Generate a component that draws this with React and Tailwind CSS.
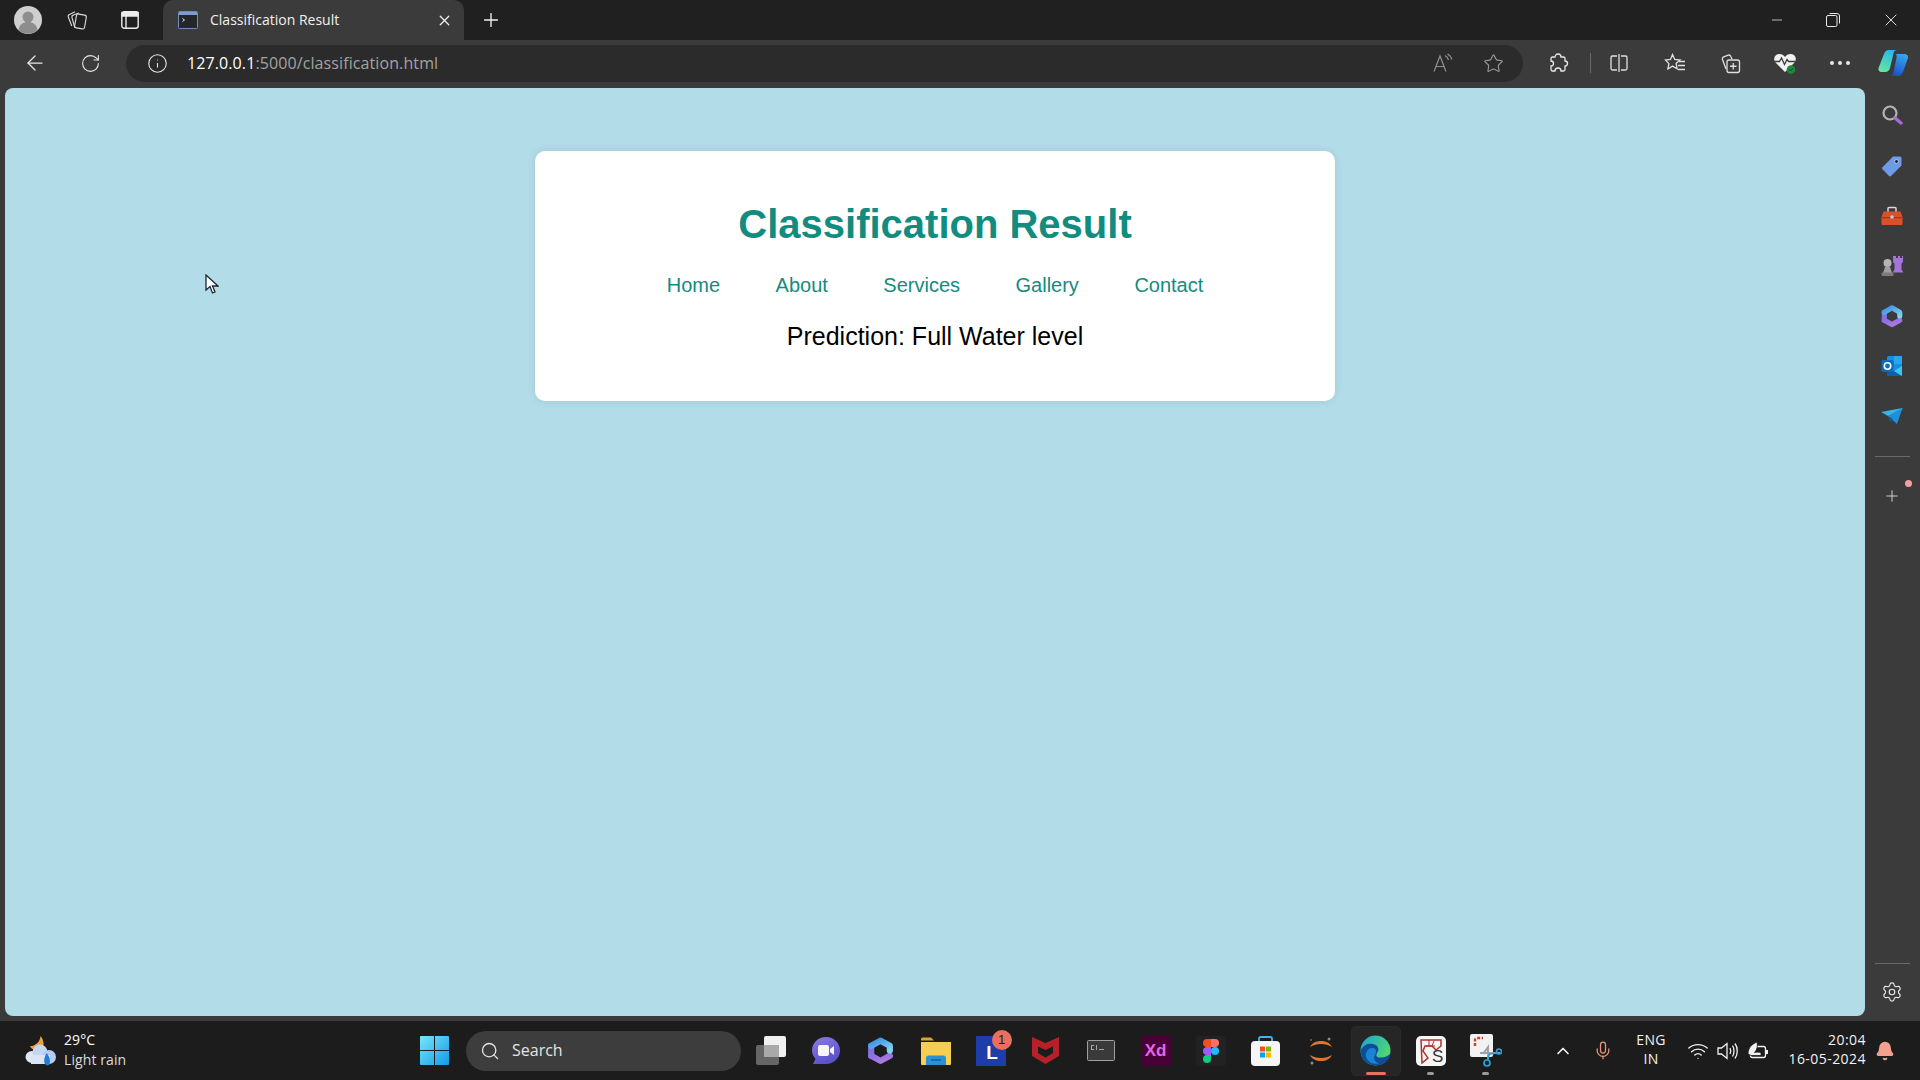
import {
  ArrowLeft,
  Bell,
  ChevronUp,
  Info,
  Mic,
  Minus,
  Plus,
  RotateCw,
  Search,
  Settings,
  Star,
  Wifi,
  X,
} from "lucide-react";

const uiFont = "font-['Open_Sans','Noto_Sans',sans-serif]";

const NAV_LINKS = ["Home", "About", "Services", "Gallery", "Contact"];

const Avatar = () => (
  <svg width="28" height="28" viewBox="0 0 28 28">
    <circle cx="14" cy="14" r="14" fill="#cfcfcf" />
    <circle cx="14" cy="11" r="5.5" fill="#8d8d8d" />
    <path d="M4.5 24c1-6 5-8 9.500-8s8.500 2 9.500 8a14 14 0 0 1-19 0z" fill="#8d8d8d" />
  </svg>
);

const CollectionsTabs = () => (
  <svg width="22" height="22" viewBox="0 0 22 22" fill="none" stroke="#dcdcdc" strokeWidth="1.1">
    <rect x="9.500" y="5.500" width="10" height="14" rx="2" transform="rotate(10 14.500 12.500)" />
    <path d="M8.800 18.800 6 8.500a2 2 0 0 1 1.400-2.400l5.400-2" />
    <path d="M5.800 17 2.300 8a2 2 0 0 1 1.200-2.500L9 2.800" />
  </svg>
);

const TabsIcon = () => (
  <svg width="18" height="18" viewBox="0 0 18 18" fill="none" stroke="#ececec" strokeWidth="1.4">
    <rect x="0.800" y="0.800" width="16.400" height="16.400" rx="2.500" />
    <path d="M1 1.500h16v3.500H1z" fill="#ececec" />
    <path d="M5 5v12" />
  </svg>
);

const Favicon = () => (
  <svg width="20" height="18" viewBox="0 0 20 18">
    <rect x="0.500" y="0.500" width="19" height="17" rx="1" fill="#23262b" stroke="#6f8fb8" />
    <rect x="1" y="1" width="18" height="3" fill="#7d9dc9" />
    <path d="m4.500 7.500 2 1.500-2 1.500" fill="none" stroke="#e8e8e8" strokeWidth="1" />
  </svg>
);

const Restore = () => (
  <svg width="14" height="14" viewBox="0 0 14 14" fill="none" stroke="#e8e8e8" strokeWidth="1">
    <rect x="0.500" y="2.500" width="10.500" height="11" rx="1.500" />
    <path d="M3.500 0.500h7.500a2.500 2.500 0 0 1 2.500 2.500v7.500" />
  </svg>
);

const ReadAloud = () => (
  <svg width="20" height="20" viewBox="0 0 20 20" fill="none" stroke="#8f8f8f" strokeWidth="1.2">
    <path d="m1 18.500 6-15.500 6 15.500M3 13.500h8" />
    <path d="M12 2.500c2 1 3 2.500 3.500 4.500M14.500 1c2.500 1.300 3.800 3.200 4.300 5.500" />
  </svg>
);

const ExtensionPiece = () => (
  <svg width="22" height="22" viewBox="0 0 22 22" fill="none" stroke="#e8e8e8" strokeWidth="1.3">
    <path d="M11 2a3 3 0 0 1 3 3h2.500A1.500 1.500 0 0 1 18 6.500V9a2.500 2.500 0 0 1 0 5v3.500a1.500 1.500 0 0 1-1.500 1.500H14a3 3 0 0 0-6 0H5.500A1.500 1.500 0 0 1 4 17.500V14a2.500 2.500 0 0 0 0-5V6.500A1.500 1.500 0 0 1 5.500 5H8a3 3 0 0 1 3-3z" />
  </svg>
);

const SplitScreen = () => (
  <svg width="20" height="20" viewBox="0 0 20 20" fill="none" stroke="#e0e0e0" strokeWidth="1.3">
    <path d="M8 3H3.500A1.500 1.500 0 0 0 2 4.500v11A1.500 1.500 0 0 0 3.500 17H8M12 3h4.500A1.500 1.500 0 0 1 18 4.500v11a1.500 1.500 0 0 1-1.500 1.500H12" />
    <path d="M10 1v18" />
  </svg>
);

const Favorites = () => (
  <svg width="22" height="20" viewBox="0 0 22 20" fill="none" stroke="#e0e0e0" strokeWidth="1.3">
    <path d="m8.500 1.500 2.300 5 5.200.6-3.900 3.500 1 5.100-4.600-2.600-4.600 2.900 1-5.400L1.500 7.100l5-.6z" />
    <path d="M15 8.500h6M14 12.500h7M14 16.500h7" />
  </svg>
);

const Collections = () => (
  <svg width="21" height="21" viewBox="0 0 21 21" fill="none" stroke="#e0e0e0" strokeWidth="1.3">
    <path d="M6 16 2.500 6.500a2 2 0 0 1 1.200-2.600l4.500-1.700a2 2 0 0 1 2.500 1.100L12 6" />
    <rect x="7" y="7" width="12.500" height="12.500" rx="2" />
    <path d="M13.250 10v6.500M10 13.250h6.500" />
  </svg>
);

const HeartPulse = () => (
  <svg width="24" height="24" viewBox="0 0 24 24">
    <path d="M12 21 2.500 11.500C0 8.500 1 3.500 6 3c2.500-.2 4.500 1 6 3 1.500-2 3.500-3.200 6-3 5 .5 6 5.500 3.500 8.500z" fill="#f2f2f2" />
    <path d="M1.500 10.500h5l2-3.500 3 6.500 2.500-5 1.500 2h7" fill="none" stroke="#3b3b3b" strokeWidth="1.300" />
    <circle cx="18" cy="18.500" r="4.300" fill="#1f8a3a" />
    <path d="m16 18.500 1.500 1.500 2.500-2.800" fill="none" stroke="#0e4c1e" strokeWidth="1" />
  </svg>
);

const CopilotLogo = () => (
  <svg width="30" height="26" viewBox="0 0 30 26">
    <defs>
      <linearGradient id="copLeft" x1="0.700" y1="0" x2="0.300" y2="1">
        <stop offset="0" stopColor="#2cb5ee" />
        <stop offset="1" stopColor="#62e6a0" />
      </linearGradient>
      <linearGradient id="copRight" x1="0.700" y1="0" x2="0.300" y2="1">
        <stop offset="0" stopColor="#39a5f0" />
        <stop offset="1" stopColor="#1650c8" />
      </linearGradient>
    </defs>
    <path d="M11 0h8c-2 0-3 1.500-3.500 3.500L12 18c-.5 2-2 4-5 4H3.500C1 22 0 20 .5 18L6 4c1-2.500 2.500-4 5-4z" fill="url(#copLeft)" />
    <path d="M18 4h8.500c2.500 0 4 2 3.500 4l-5 14c-1 2.500-3 4-6 4h-7.500c2.500 0 3.500-2 4-4l3-14c.2-1 .2-3-.5-4z" fill="url(#copRight)" />
  </svg>
);

const SearchColor = () => (
  <svg width="22" height="22" viewBox="0 1 22 22" fill="none">
    <circle cx="9" cy="9" r="6.500" stroke="#b4b4b4" strokeWidth="2.200" />
    <path d="m14 14 6 5" stroke="#a76bd8" strokeWidth="3.500" strokeLinecap="round" />
  </svg>
);

const Tag = () => (
  <svg width="22" height="22" viewBox="0 0 22 22">
    <path d="M12 1.500h7a1.500 1.500 0 0 1 1.500 1.500v7.500L10 21a1.500 1.500 0 0 1-2 0l-6.500-6.800a1.500 1.500 0 0 1 0-2z" fill="#6d9be8" />
    <circle cx="15.500" cy="6.500" r="2" fill="#1e2b4a" stroke="#c8d8f5" strokeWidth="0.800" />
  </svg>
);

const Toolbox = () => (
  <svg width="22" height="20" viewBox="0 0 22 20">
    <path d="M7 6V2.500A1 1 0 0 1 8 1.500h6a1 1 0 0 1 1 1V6" fill="none" stroke="#d8d8d8" strokeWidth="1.500" />
    <path d="M2.500 5.500h17L21.500 11v7a1 1 0 0 1-1 1h-19a1 1 0 0 1-1-1v-7z" fill="#d9502a" />
    <rect x="0.500" y="11" width="21" height="1.200" fill="#a33717" />
    <circle cx="11" cy="11" r="1.800" fill="#c8c8c8" />
  </svg>
);

const Chess = () => (
  <svg width="24" height="24" viewBox="0 1 24 24">
    <path d="M14 3h2v2h2V3h2v2h2V3h1v6l-1.500 1.500v6l2 3H12.500l2-3v-6L13 9V3z" fill="#a673d9" />
    <circle cx="7.500" cy="10" r="4" fill="#b5b5b5" />
    <path d="M5 14h5l2 6H3z" fill="#a0a0a0" />
    <rect x="1.500" y="19.500" width="12" height="3.500" rx="1" fill="#7c7c7c" />
  </svg>
);

// hexagon ring, blue on the upper right and purple on the lower left
const OfficeCopilot = ({ size = 26, id }) => (
  <svg width={size} height={size} viewBox="0 0 28 28" fill="none" strokeWidth="6" strokeLinejoin="round" strokeLinecap="round">
    <defs>
      <linearGradient id={`${id}Top`} x1="0" y1="0" x2="1" y2="1">
        <stop offset="0" stopColor="#3f8fe8" />
        <stop offset="1" stopColor="#7fd4ee" />
      </linearGradient>
      <linearGradient id={`${id}Low`} x1="0" y1="0" x2="1" y2="1">
        <stop offset="0" stopColor="#8c6fe0" />
        <stop offset="1" stopColor="#b07ae0" />
      </linearGradient>
    </defs>
    <path d="M5 19V9.500" stroke="#7f74dc" />
    <path d="M5 19 14 24 23 19" stroke={`url(#${id}Low)`} />
    <path d="M5 9.500 14 4.500 23 9.500V14" stroke={`url(#${id}Top)`} />
  </svg>
);

const Outlook = () => (
  <svg width="22" height="22" viewBox="0 0 22 22">
    <rect x="6" y="1" width="15" height="20" rx="1.500" fill="#1490df" />
    <rect x="13" y="1" width="8" height="8" fill="#28a8ea" />
    <path d="M6 12 21 21H7.500A1.500 1.500 0 0 1 6 19.500z" fill="#0f5fa8" />
    <path d="m21 11-8 5 8 5z" fill="#50d9ff" opacity="0.700" />
    <rect x="0.500" y="5" width="12" height="12" rx="1.500" fill="#0a6cbd" />
    <circle cx="6.500" cy="11" r="3.200" fill="none" stroke="#fff" strokeWidth="1.600" />
  </svg>
);

const Send = () => (
  <svg width="22" height="18" viewBox="0 0 22 18">
    <path d="M0 5 21.500 1 7 9z" fill="#37b4e8" />
    <path d="M21.500 1 7 9l9 4z" fill="#5ac8f0" />
    <path d="M21.500 1 16 17l-9-8z" fill="#1e8fd8" />
    <path d="m7 9 3 6 2-3z" fill="#0f5f9f" />
  </svg>
);

const Weather = () => (
  <svg width="32" height="32" viewBox="0 0 32 32">
    <path d="M15.500 1c-.2 2-.7 3.500-1.500 5-2 3-6 5.500-9 5 1 3 4 4 7 4 4 0 7-3 6.500-7-.2-2.500-1.300-5-3-7z" fill="#eda035" />
    <ellipse cx="7" cy="22" rx="6.500" ry="6" fill="#dfe8f7" />
    <circle cx="15" cy="17" r="7.500" fill="#c4d6f3" />
    <circle cx="24" cy="22" r="7" fill="#b6cbef" />
    <rect x="6" y="20" width="19" height="9" fill="#dbe5f6" />
    <path d="M21.500 18c-2 4-3 7-2 10 .5 2 3 3 4.500 2 1.500-1.500 1-5 .5-7-.6-2-1.800-4-3-5z" fill="#1e7fd6" />
  </svg>
);

const WindowsLogo = () => (
  <svg width="29" height="29" viewBox="0 0 29 29">
    <defs>
      <linearGradient id="winGrad" x1="0" y1="0" x2="1" y2="1">
        <stop offset="0" stopColor="#7ae6fb" />
        <stop offset="1" stopColor="#0f9be8" />
      </linearGradient>
    </defs>
    <path d="M1 0h13v14H0V1a1 1 0 0 1 1-1zM15 0h13a1 1 0 0 1 1 1v13H15zM0 15h14v14H1a1 1 0 0 1-1-1zM15 15h14v13a1 1 0 0 1-1 1H15z" fill="url(#winGrad)" />
  </svg>
);

const TaskView = () => (
  <svg width="30" height="29" viewBox="0 0 30 29">
    <rect x="0" y="9" width="23" height="20" rx="2" fill="#666" />
    <rect x="8" y="0" width="22" height="21" rx="2" fill="#f0f0f0" />
    <rect x="8" y="9" width="15" height="12" fill="#a9a9a9" />
  </svg>
);

const Meet = () => (
  <svg width="30" height="30" viewBox="0 0 30 30">
    <defs>
      <linearGradient id="meetGrad" x1="0" y1="0" x2="0.500" y2="1">
        <stop offset="0" stopColor="#8b7be6" />
        <stop offset="1" stopColor="#5a50c8" />
      </linearGradient>
    </defs>
    <path d="M15 1c8 0 14 6 14 13.500S23 28 15 28H2l2.500-5C2.500 21 1 18 1 14.500 1 7 7 1 15 1z" fill="url(#meetGrad)" />
    <rect x="7" y="9" width="11" height="11" rx="2" fill="#f6f4ff" />
    <path d="m19 13 4-3v9l-4-3z" fill="#f6f4ff" />
  </svg>
);

const Explorer = () => (
  <svg width="30" height="28" viewBox="0 0 30 28">
    <path d="M0 2a1.500 1.500 0 0 1 1.500-1.500H10l3 3H0z" fill="#d7a72e" />
    <path d="M0 5h30v22a1 1 0 0 1-1 1H1a1 1 0 0 1-1-1z" fill="#f7cf50" />
    <path d="M5 28V21a2.500 2.500 0 0 1 2.500-2.500h15A2.500 2.500 0 0 1 25 21v7z" fill="#2b91d5" />
    <rect x="10" y="22" width="10" height="2" fill="#1a6ea8" />
  </svg>
);

const McAfee = () => (
  <svg width="27" height="27" viewBox="0 0 27 27">
    <path d="M0 0 13.500 6 27 0v19l-13.500 8L0 19z" fill="#b5202a" />
    <path d="m6 9.500 7.500 3.500L21 9.500V16l-7.500 4.500L6 16z" fill="#1c1c1c" />
  </svg>
);

const Terminal = () => (
  <svg width="28" height="21" viewBox="0 0 28 21">
    <rect x="0.500" y="0.500" width="27" height="20" rx="1" fill="#3a3a3a" stroke="#a0a0a0" />
    <path d="M4 5h3v1H5v3h2v1H4zM9 5h1v5H9zM12 9h5v1h-5z" fill="#a8a8a8" />
  </svg>
);

const Figma = () => (
  <svg width="30" height="30" viewBox="0 0 30 30">
    <rect width="30" height="30" rx="3" fill="#222" />
    <path d="M15 3h-4a4 4 0 0 0 0 8h4z" fill="#f24e1e" />
    <path d="M15 3h4a4 4 0 0 1 0 8h-4z" fill="#ff7262" />
    <path d="M15 11h-4a4 4 0 0 0 0 8h4z" fill="#a259ff" />
    <circle cx="19" cy="15" r="4" fill="#1abcfe" />
    <path d="M11 19h4v4a4 4 0 1 1-4-4z" fill="#0acf83" />
  </svg>
);

const Store = () => (
  <svg width="29" height="30" viewBox="0 0 29 30">
    <path d="M8 6V2.500A1.500 1.500 0 0 1 9.500 1h10A1.500 1.500 0 0 1 21 2.500V6" fill="none" stroke="#3fb5e8" strokeWidth="1.800" />
    <rect x="0" y="5" width="29" height="25" rx="4" fill="#f6f6f6" />
    <rect x="9" y="10.500" width="5" height="5" fill="#f25022" />
    <rect x="15" y="10.500" width="5" height="5" fill="#7fba00" />
    <rect x="9" y="16.500" width="5" height="5" fill="#00a4ef" />
    <rect x="15" y="16.500" width="5" height="5" fill="#ffb900" />
  </svg>
);

const Orbit = () => (
  <svg width="24" height="32" viewBox="0 0 24 32" fill="none">
    <path d="M1 12c2-4 6-6 11-6s9 2 11 6c-3-2-7-3-11-3s-8 1-11 3zM1 20c2 4 6 6 11 6s9-2 11-6c-3 2-7 3-11 3s-8-1-11-3z" fill="#e0762c" />
    <circle cx="3" cy="28" r="1.500" fill="#8a8a8a" />
    <circle cx="20" cy="4" r="1.500" fill="#8a8a8a" />
    <circle cx="2" cy="5" r="1" fill="#666" />
  </svg>
);

const Edge = () => (
  <svg width="31" height="31" viewBox="0 0 31 31">
    <defs>
      <linearGradient id="edgeGrad" x1="0" y1="0" x2="1" y2="0.600">
        <stop offset="0" stopColor="#1aa3d8" />
        <stop offset="1" stopColor="#54d96a" />
      </linearGradient>
    </defs>
    <circle cx="15.500" cy="15.500" r="15" fill="url(#edgeGrad)" />
    <path d="M30.500 18.500c-1 7-7 12-15 12C7 30.500.5 23.500.5 15.500 3.500 9.500 9 8 13 9c5 1 7 5 4 9-1 2-1 4 2 4.500 5 .5 9-1.500 11.500-4z" fill="#0c4f96" />
    <path d="M7.500 15.500c2-3 6-3 8-1 2 3-1 5-1.500 8-.2 3 2 5 5 6-6 1.500-12-2-13-7-.5-2 0-4 1.500-6z" fill="#1b83d4" />
  </svg>
);

const KsLogo = () => (
  <svg width="30" height="30" viewBox="0 0 30 30">
    <rect width="30" height="30" rx="5" fill="#f6f6f6" />
    <path d="M5 4h20v6l-5 4-4-4H9l-2 5 5 7-6 5z" fill="none" stroke="#b03030" strokeWidth="1.500" />
    <path d="M10 10h9M13 4v6M18 5l-2 5" stroke="#b03030" strokeWidth="1" />
    <text x="16" y="26" fontSize="17" fontFamily="Liberation Sans, sans-serif" fill="#333">S</text>
  </svg>
);

const Snip = () => (
  <svg width="32" height="33" viewBox="0 0 32 33" fill="none">
    <rect x="0" y="0" width="23" height="23" rx="2" fill="#f2f2f2" />
    <path d="M5 12V6a2 2 0 0 1 2-2h6" stroke="#c8432e" strokeWidth="2.400" strokeDasharray="3 1.500" />
    <path d="M13 20 18 13v12" stroke="#9ca3ab" strokeWidth="2" />
    <path d="M10 19h20" stroke="#9ca3ab" strokeWidth="2" />
    <circle cx="17" cy="29" r="3" stroke="#27a3d8" strokeWidth="1.700" />
    <circle cx="29" cy="17.500" r="2.500" stroke="#27a3d8" strokeWidth="1.700" />
    <path d="M18 26c0-2 .5-4 1.500-6 2 0 5-.5 7-1" stroke="#27a3d8" strokeWidth="1.700" />
  </svg>
);

const Speaker = () => (
  <svg width="22" height="20" viewBox="0 0 22 20" fill="none" stroke="#f2f2f2" strokeWidth="1.300">
    <path d="M1 7v6h3.500L10 17.500v-15L4.500 7z" />
    <path d="M13 7c1 1.800 1 4.200 0 6M15.500 4.500c2 3 2 8 0 11M18 2.500c3 4 3 11 0 15" />
  </svg>
);

const Battery = () => (
  <svg width="22" height="20" viewBox="0 0 22 20">
    <rect x="3.500" y="5.500" width="15" height="11" rx="2" fill="none" stroke="#f2f2f2" strokeWidth="1.300" />
    <rect x="19" y="9" width="2" height="4" fill="#f2f2f2" />
    <path d="M1 13C1 7 5 3 10 1c1 4 0 8-2.500 10.500 1.500-.5 4-.5 6.500 0v3H4z" fill="#f2f2f2" stroke="#1c1c1c" strokeWidth="0.800" />
  </svg>
);

const Cursor = () => (
  <svg width="14" height="21" viewBox="0 0 14 21" className="absolute left-[200px] top-[186px]">
    <path d="M1 1v15l4-3.500L7.500 19l2.500-1-2.500-6H13z" fill="#fff" stroke="#1c2530" strokeWidth="1.300" />
  </svg>
);

const taskbarApps = [
  { key: "task", icon: <TaskView /> },
  { key: "meet", icon: <Meet /> },
  { key: "copilot", icon: <OfficeCopilot size={29} id="tb" /> },
  { key: "explorer", icon: <Explorer /> },
  {
    key: "lens",
    icon: (
      <div className="relative flex h-[30px] w-[30px] items-center justify-center bg-[#1f3da8] pt-[3px] pl-[3px] text-[19px] font-bold leading-none text-white font-['Liberation_Sans',sans-serif]">
        L
        <span className="absolute -right-[6px] -top-[6px] flex h-[20px] w-[20px] items-center justify-center rounded-full bg-[#e8705f] text-[13px] font-normal text-[#1c1c1c]">
          1
        </span>
      </div>
    ),
  },
  { key: "mcafee", icon: <McAfee /> },
  { key: "terminal", icon: <Terminal /> },
  {
    key: "xd",
    icon: (
      <div className="flex h-[30px] w-[30px] items-center justify-center rounded-[3px] bg-[#470137] text-[17px] font-bold text-[#e565e8] font-['Liberation_Sans',sans-serif]">
        Xd
      </div>
    ),
  },
  { key: "figma", icon: <Figma /> },
  { key: "store", icon: <Store /> },
  { key: "orbit", icon: <Orbit /> },
  { key: "edge", icon: <Edge />, active: true },
  { key: "ks", icon: <KsLogo />, running: true },
  { key: "snip", icon: <Snip />, running: true },
];

const sideIcons = [
  { key: "search", icon: <SearchColor /> },
  { key: "tag", icon: <Tag /> },
  { key: "toolbox", icon: <Toolbox /> },
  { key: "chess", icon: <Chess /> },
  { key: "copilot", icon: <OfficeCopilot size={24} id="sb" /> },
  { key: "outlook", icon: <Outlook /> },
  { key: "send", icon: <Send /> },
];

const TabBar = () => (
  <div className="flex h-10 items-end bg-[#202020] text-[#f0f0f0]">
    <div className="flex h-10 w-[163px] shrink-0 items-center pl-[14px]">
      <Avatar />
      <div className="ml-[24px] flex w-[22px] justify-center">
        <CollectionsTabs />
      </div>
      <div className="ml-[31px] flex w-[22px] justify-center">
        <TabsIcon />
      </div>
    </div>
    <div className="flex h-10 w-[301px] shrink-0 items-center rounded-t-[10px] bg-[#3b3b3b] pl-[15px]">
      <Favicon />
      <span className={`ml-[12px] pb-[2px] text-[14px] ${uiFont}`}>Classification Result</span>
      <X size={17} strokeWidth={1.8} className="ml-auto mr-[11px]" />
    </div>
    <div className="flex h-10 w-[54px] items-center justify-center">
      <Plus size={22} strokeWidth={1.5} />
    </div>
    <div className="ml-auto flex h-10 items-center">
      <div className="flex w-[55px] justify-center">
        <Minus size={16} strokeWidth={1.1} />
      </div>
      <div className="flex w-[58px] justify-center">
        <Restore />
      </div>
      <div className="flex w-[58px] justify-center">
        <X size={20} strokeWidth={1.1} />
      </div>
    </div>
  </div>
);

const Toolbar = () => (
  <div className="flex h-12 items-center bg-[#3b3b3b] pb-[2px] text-[#e8e8e8]">
    <div className="ml-[13px] flex w-11 justify-center">
      <ArrowLeft size={24} strokeWidth={1.25} />
    </div>
    <div className="ml-[11px] flex w-11 justify-center">
      <RotateCw size={21} strokeWidth={1.25} />
    </div>
    <div className="ml-[14px] flex h-[37px] w-[1397px] items-center rounded-full bg-[#2b2b2b]">
      <Info size={21} strokeWidth={1.25} className="ml-[21px]" />
      <span className={`ml-[19px] text-[16px] tracking-[0.1px] ${uiFont}`}>
        <span className="text-white">127.0.0.1</span>
        <span className="text-[#a3a3a3]">:5000/classification.html</span>
      </span>
      <div className="ml-auto flex w-[40px] justify-center">
        <ReadAloud />
      </div>
      <div className="mr-[10px] ml-[10px] flex w-[40px] justify-center">
        <Star size={21} strokeWidth={1.25} className="text-[#9a9a9a]" />
      </div>
    </div>
    <div className="ml-[15px] flex w-10 justify-center">
      <ExtensionPiece />
    </div>
    <div className="ml-[12px] h-[20px] w-px bg-[#6a6a6a]" />
    <div className="ml-[8px] flex w-10 justify-center">
      <SplitScreen />
    </div>
    <div className="ml-[16px] flex w-10 justify-center">
      <Favorites />
    </div>
    <div className="ml-[15px] flex w-10 justify-center">
      <Collections />
    </div>
    <div className="ml-[15px] flex w-10 justify-center">
      <HeartPulse />
    </div>
    <div className="ml-[15px] flex w-10 items-center justify-center gap-1">
      <span className="h-1 w-1 rounded-full bg-[#e8e8e8]" />
      <span className="h-1 w-1 rounded-full bg-[#e8e8e8]" />
      <span className="h-1 w-1 rounded-full bg-[#e8e8e8]" />
    </div>
    <div className="ml-[18px] flex w-[30px] justify-center">
      <CopilotLogo />
    </div>
  </div>
);

const Sidebar = () => (
  <aside className="flex w-[55px] shrink-0 flex-col items-center pt-[3px] pr-[1px] text-[#d8d8d8]">
    {sideIcons.map((item) => (
      <div key={item.key} className="flex h-[50px] w-full items-center justify-center">
        {item.icon}
      </div>
    ))}
    <div className="mt-[15px] h-px w-[35px] bg-[#6a6a6a]" />
    <div className="relative mt-[14px] flex h-[50px] w-full items-center justify-center">
      <Plus size={18} strokeWidth={1.25} />
      <span className="absolute right-[7px] top-[9px] h-[7px] w-[7px] rounded-full bg-[#f1a0a6]" />
    </div>
    <div className="mt-auto h-px w-[35px] bg-[#6a6a6a]" />
    <div className="mt-[8px] mb-[9px] flex h-10 w-full items-center justify-center">
      <Settings size={22} strokeWidth={1.25} className="text-[#ececec]" />
    </div>
  </aside>
);

const ResultCard = () => (
  <section className="mx-auto mt-[63px] w-[800px] rounded-[10px] bg-white pt-[50px] pb-[50px] text-center shadow-[0_0_10px_rgba(0,0,0,0.1)] font-['Liberation_Sans',Arial,sans-serif]">
    <h1 className="text-[40px] font-bold leading-[46px] text-[#128c7e]">Classification Result</h1>
    <nav className="mt-[27px] flex justify-center gap-[55.500px] text-[20px] leading-[23px] text-[#128c7e]">
      {NAV_LINKS.map((link) => (
        <a key={link} href="#">
          {link}
        </a>
      ))}
    </nav>
    <p className="mt-[25px] text-[25px] leading-[29px] text-black">Prediction: Full Water level</p>
  </section>
);

const Taskbar = () => (
  <footer className={`flex h-[59px] items-center bg-[#1c1c1c] text-[#f2f2f2] ${uiFont}`}>
    <div className="flex w-[420px] shrink-0 items-center pl-[25px]">
      <Weather />
      <div className="ml-[7px] pb-[2px] text-[14px] leading-[20px] tracking-[0.1px]">
        <div className="text-white">29°C</div>
        <div className="text-[#dcdcdc]">Light rain</div>
      </div>
    </div>
    <WindowsLogo />
    <div className="ml-[17px] flex h-10 w-[275px] shrink-0 items-center rounded-full bg-[#3d3d3d] pl-[14px] text-[#e4e4e4]">
      <Search size={20} strokeWidth={1.6} />
      <span className="ml-[12px] pb-[2px] text-[16px]">Search</span>
    </div>
    <div className="ml-[2px] flex shrink-0">
      {taskbarApps.map((app) => (
        <div key={app.key} className="relative flex h-[50px] w-[55px] items-center justify-center">
          {app.active && <div className="absolute inset-x-[2.500px] inset-y-0 rounded-[5px] border border-[#2a2a2a] bg-[#262626]" />}
          <div className="relative">{app.icon}</div>
          {app.active && <span className="absolute bottom-[1px] h-[3px] w-[20px] rounded-full bg-[#e8705f]" />}
          {app.running && <span className="absolute bottom-[1px] h-[3px] w-[7px] rounded-full bg-[#9a9a9a]" />}
        </div>
      ))}
    </div>
    <div className="ml-[40px] flex w-[20px] justify-center">
      <ChevronUp size={22} strokeWidth={2} />
    </div>
    <div className="ml-[20px] flex w-[20px] justify-center">
      <Mic size={21} strokeWidth={1.5} className="text-[#e8957a]" />
    </div>
    <div className="ml-[20px] w-[36px] pb-[3px] text-center text-[14px] leading-[19px] tracking-[0.3px]">
      <div>ENG</div>
      <div>IN</div>
    </div>
    <div className="ml-[17px] flex w-[24px] justify-center">
      <Wifi size={22} strokeWidth={1.5} />
    </div>
    <div className="ml-[6px] flex w-[24px] justify-center">
      <Speaker />
    </div>
    <div className="ml-[6px] flex w-[24px] justify-center">
      <Battery />
    </div>
    <div className="ml-auto mr-[9px] pb-[4px] text-right text-[14px] leading-[19px] tracking-[0.45px]">
      <div>20:04</div>
      <div>16-05-2024</div>
    </div>
    <Bell size={20} className="mr-[25px] fill-[#f3a18f] text-[#f3a18f]" />
  </footer>
);

const App = () => (
  <div className="flex h-screen w-full flex-col overflow-hidden bg-[#3b3b3b]">
    <TabBar />
    <Toolbar />
    <div className="flex min-h-0 flex-1">
      <main className="relative mb-[5px] ml-[5px] flex-1 overflow-hidden rounded-[8px] bg-[#b2dde8]">
        <Cursor />
        <ResultCard />
      </main>
      <Sidebar />
    </div>
    <Taskbar />
  </div>
);

export default App;
